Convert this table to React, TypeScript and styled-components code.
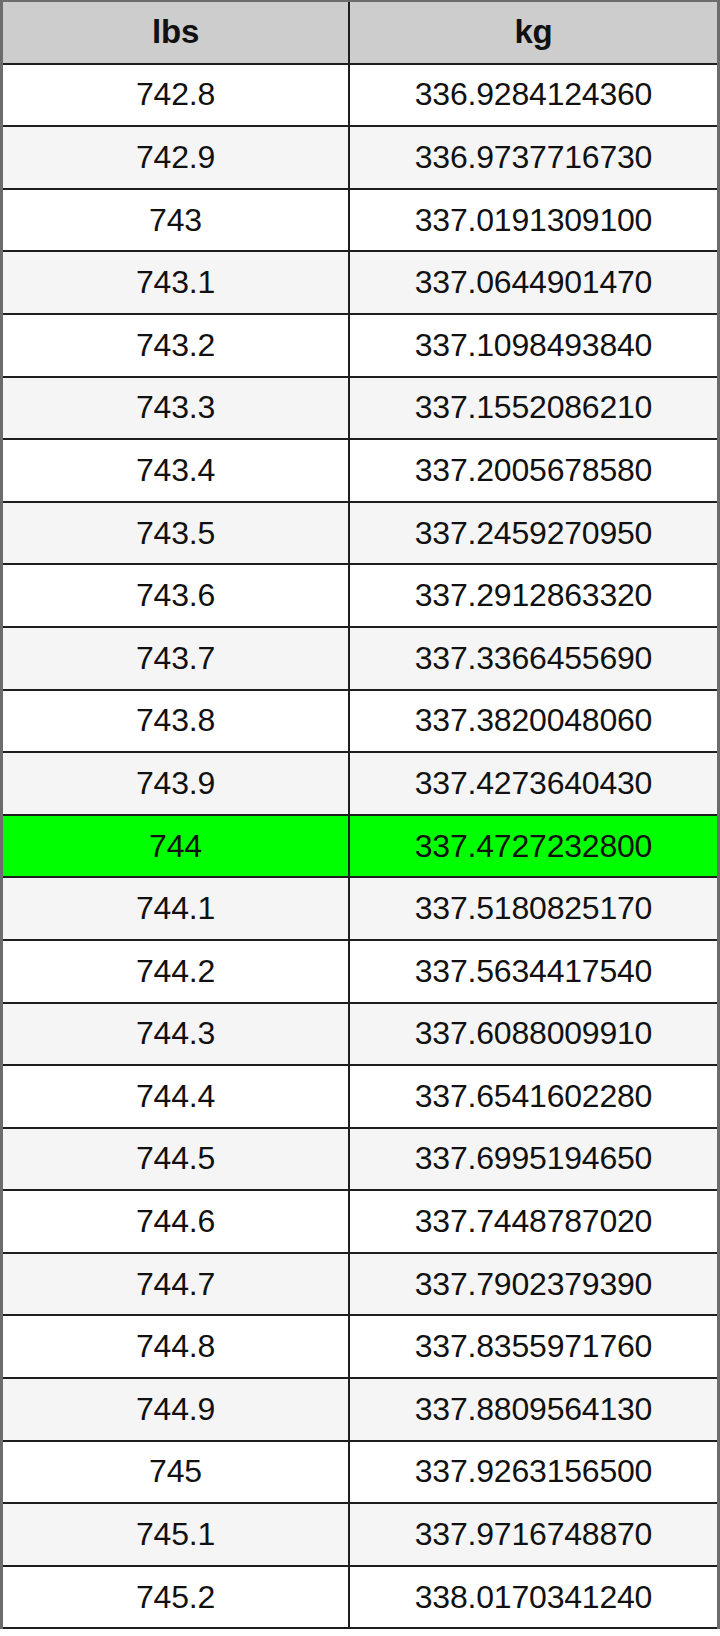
import React from 'react';
import styled, { createGlobalStyle } from 'styled-components';

const GlobalStyle = createGlobalStyle`
  html, body {
    margin: 0;
    padding: 0;
    background: #ffffff;
  }
  body {
    font-family: "Liberation Sans", Arial, sans-serif;
  }
`;

const rows: [string, string][] = [
  ['742.8', '336.9284124360'],
  ['742.9', '336.9737716730'],
  ['743', '337.0191309100'],
  ['743.1', '337.0644901470'],
  ['743.2', '337.1098493840'],
  ['743.3', '337.1552086210'],
  ['743.4', '337.2005678580'],
  ['743.5', '337.2459270950'],
  ['743.6', '337.2912863320'],
  ['743.7', '337.3366455690'],
  ['743.8', '337.3820048060'],
  ['743.9', '337.4273640430'],
  ['744', '337.4727232800'],
  ['744.1', '337.5180825170'],
  ['744.2', '337.5634417540'],
  ['744.3', '337.6088009910'],
  ['744.4', '337.6541602280'],
  ['744.5', '337.6995194650'],
  ['744.6', '337.7448787020'],
  ['744.7', '337.7902379390'],
  ['744.8', '337.8355971760'],
  ['744.9', '337.8809564130'],
  ['745', '337.9263156500'],
  ['745.1', '337.9716748870'],
  ['745.2', '338.0170341240'],
];

const HIGHLIGHT = '744';

const Table = styled.div`
  width: 720px;
  box-sizing: border-box;
  border-top: 2.5px solid #6c6c6c;
  border-left: 3px solid #6c6c6c;
  border-right: 3px solid #6c6c6c;
  display: flex;
  flex-direction: column;
`;

const Row = styled.div<{ $bg: string }>`
  display: grid;
  grid-template-columns: 345px 2px 1fr;
  height: 62.6px;
  box-sizing: border-box;
  border-bottom: 2px solid #1e1e1e;
  background: ${({ $bg }) => $bg};
`;

const Divider = styled.div`
  background: #1e1e1e;
`;

const Cell = styled.div<{ $head?: boolean }>`
  display: flex;
  align-items: center;
  justify-content: center;
  color: #111111;
  font-size: ${({ $head }) => ($head ? '33px' : '32px')};
  font-weight: ${({ $head }) => ($head ? 700 : 400)};
  letter-spacing: -0.2px;
`;

const rowColor = (lbs: string, i: number) => {
  if (lbs === HIGHLIGHT) return '#00ff00';
  return i % 2 === 0 ? '#ffffff' : '#f5f5f5';
};

const App: React.FC = () => (
  <>
    <GlobalStyle />
    <Table>
      <Row $bg="#cdcdcd">
        <Cell $head>lbs</Cell>
        <Divider />
        <Cell $head>kg</Cell>
      </Row>
      {rows.map(([lbs, kg], i) => (
        <Row key={lbs} $bg={rowColor(lbs, i)}>
          <Cell>{lbs}</Cell>
          <Divider />
          <Cell>{kg}</Cell>
        </Row>
      ))}
    </Table>
  </>
);

export default App;
